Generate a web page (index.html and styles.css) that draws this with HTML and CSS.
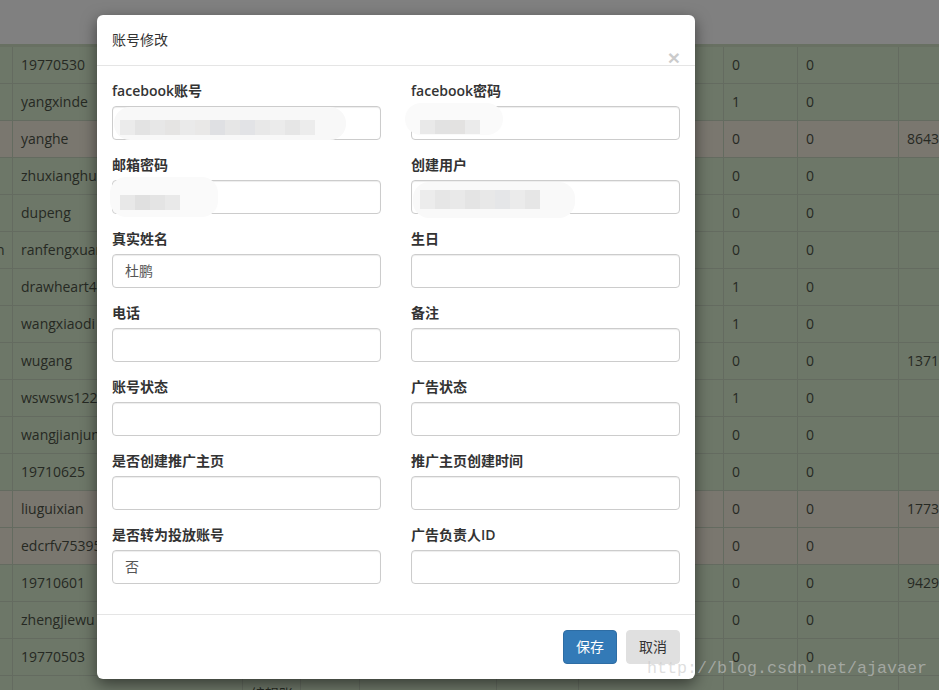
FILE: index.html
```html
<!DOCTYPE html>
<html lang="zh-CN">
<head>
<meta charset="utf-8">
<title>账号修改</title>
<link rel="stylesheet" href="styles.css">
</head>
<body>
<div class="page">
  <div class="thead"></div>
  <div class="thead-rule"></div>
  <div class="grid">
    <div class="row g"><div class="c c0"></div><div class="c c1">19770530</div><div class="c c2"></div><div class="c c3"></div><div class="c c4"></div><div class="c c5"></div><div class="c c6"></div><div class="c c7">0</div><div class="c c8">0</div><div class="c c9"></div></div>
    <div class="row g"><div class="c c0"></div><div class="c c1">yangxinde</div><div class="c c2"></div><div class="c c3"></div><div class="c c4"></div><div class="c c5"></div><div class="c c6"></div><div class="c c7">1</div><div class="c c8">0</div><div class="c c9"></div></div>
    <div class="row b"><div class="c c0"></div><div class="c c1">yanghe</div><div class="c c2"></div><div class="c c3"></div><div class="c c4"></div><div class="c c5"></div><div class="c c6"></div><div class="c c7">0</div><div class="c c8">0</div><div class="c c9">8643</div></div>
    <div class="row g"><div class="c c0"></div><div class="c c1">zhuxianghu</div><div class="c c2"></div><div class="c c3"></div><div class="c c4"></div><div class="c c5"></div><div class="c c6"></div><div class="c c7">0</div><div class="c c8">0</div><div class="c c9"></div></div>
    <div class="row g"><div class="c c0"></div><div class="c c1">dupeng</div><div class="c c2"></div><div class="c c3"></div><div class="c c4"></div><div class="c c5"></div><div class="c c6"></div><div class="c c7">0</div><div class="c c8">0</div><div class="c c9"></div></div>
    <div class="row g"><div class="c c0 tail">n</div><div class="c c1">ranfengxuan</div><div class="c c2"></div><div class="c c3"></div><div class="c c4"></div><div class="c c5"></div><div class="c c6"></div><div class="c c7">0</div><div class="c c8">0</div><div class="c c9"></div></div>
    <div class="row g"><div class="c c0"></div><div class="c c1">drawheart4</div><div class="c c2"></div><div class="c c3"></div><div class="c c4"></div><div class="c c5"></div><div class="c c6"></div><div class="c c7">1</div><div class="c c8">0</div><div class="c c9"></div></div>
    <div class="row g"><div class="c c0"></div><div class="c c1">wangxiaodi</div><div class="c c2"></div><div class="c c3"></div><div class="c c4"></div><div class="c c5"></div><div class="c c6"></div><div class="c c7">1</div><div class="c c8">0</div><div class="c c9"></div></div>
    <div class="row g"><div class="c c0"></div><div class="c c1">wugang</div><div class="c c2"></div><div class="c c3"></div><div class="c c4"></div><div class="c c5"></div><div class="c c6"></div><div class="c c7">0</div><div class="c c8">0</div><div class="c c9">1371</div></div>
    <div class="row g"><div class="c c0"></div><div class="c c1">wswsws122</div><div class="c c2"></div><div class="c c3"></div><div class="c c4"></div><div class="c c5"></div><div class="c c6"></div><div class="c c7">1</div><div class="c c8">0</div><div class="c c9"></div></div>
    <div class="row g"><div class="c c0"></div><div class="c c1">wangjianjun</div><div class="c c2"></div><div class="c c3"></div><div class="c c4"></div><div class="c c5"></div><div class="c c6"></div><div class="c c7">0</div><div class="c c8">0</div><div class="c c9"></div></div>
    <div class="row g"><div class="c c0"></div><div class="c c1">19710625</div><div class="c c2"></div><div class="c c3"></div><div class="c c4"></div><div class="c c5"></div><div class="c c6"></div><div class="c c7">0</div><div class="c c8">0</div><div class="c c9"></div></div>
    <div class="row b"><div class="c c0"></div><div class="c c1">liuguixian</div><div class="c c2"></div><div class="c c3"></div><div class="c c4"></div><div class="c c5"></div><div class="c c6"></div><div class="c c7">0</div><div class="c c8">0</div><div class="c c9">1773</div></div>
    <div class="row b"><div class="c c0"></div><div class="c c1">edcrfv75395</div><div class="c c2"></div><div class="c c3"></div><div class="c c4"></div><div class="c c5"></div><div class="c c6"></div><div class="c c7">0</div><div class="c c8">0</div><div class="c c9"></div></div>
    <div class="row g"><div class="c c0"></div><div class="c c1">19710601</div><div class="c c2"></div><div class="c c3"></div><div class="c c4"></div><div class="c c5"></div><div class="c c6"></div><div class="c c7">0</div><div class="c c8">0</div><div class="c c9">9429</div></div>
    <div class="row g"><div class="c c0"></div><div class="c c1">zhengjiewu</div><div class="c c2"></div><div class="c c3"></div><div class="c c4"></div><div class="c c5"></div><div class="c c6"></div><div class="c c7">0</div><div class="c c8">0</div><div class="c c9"></div></div>
    <div class="row g"><div class="c c0"></div><div class="c c1">19770503</div><div class="c c2"></div><div class="c c3"></div><div class="c c4"></div><div class="c c5"></div><div class="c c6"></div><div class="c c7">0</div><div class="c c8">0</div><div class="c c9"></div></div>
    <div class="row g"><div class="c c0"></div><div class="c c1"></div><div class="c c2">编辑账</div><div class="c c3"></div><div class="c c4"></div><div class="c c5"></div><div class="c c6"></div><div class="c c7"></div><div class="c c8"></div><div class="c c9"></div></div>
  </div>

  <div class="modal">
    <div class="modal-header">
      <h4 class="modal-title">账号修改</h4>
      <span class="close">×</span>
    </div>
    <div class="modal-body">
      <div class="form-row">
        <div class="form-group">
          <label>facebook账号</label>
          <div class="input"></div>
          <div class="haze haze1"></div>
          <div class="pix pix1"></div>
        </div>
        <div class="form-group">
          <label>facebook密码</label>
          <div class="input"></div>
          <div class="haze haze2"></div>
          <div class="pix pix2"></div>
        </div>
      </div>
      <div class="form-row">
        <div class="form-group">
          <label>邮箱密码</label>
          <div class="input"></div>
          <div class="haze haze3"></div>
          <div class="pix pix3"></div>
        </div>
        <div class="form-group">
          <label>创建用户</label>
          <div class="input"></div>
          <div class="haze haze4"></div>
          <div class="pix pix4"></div>
        </div>
      </div>
      <div class="form-row">
        <div class="form-group">
          <label>真实姓名</label>
          <div class="input">杜鹏</div>
        </div>
        <div class="form-group">
          <label>生日</label>
          <div class="input"></div>
        </div>
      </div>
      <div class="form-row">
        <div class="form-group">
          <label>电话</label>
          <div class="input"></div>
        </div>
        <div class="form-group">
          <label>备注</label>
          <div class="input"></div>
        </div>
      </div>
      <div class="form-row">
        <div class="form-group">
          <label>账号状态</label>
          <div class="input"></div>
        </div>
        <div class="form-group">
          <label>广告状态</label>
          <div class="input"></div>
        </div>
      </div>
      <div class="form-row">
        <div class="form-group">
          <label>是否创建推广主页</label>
          <div class="input"></div>
        </div>
        <div class="form-group">
          <label>推广主页创建时间</label>
          <div class="input"></div>
        </div>
      </div>
      <div class="form-row">
        <div class="form-group">
          <label>是否转为投放账号</label>
          <div class="input">否</div>
        </div>
        <div class="form-group">
          <label>广告负责人ID</label>
          <div class="input"></div>
        </div>
      </div>
    </div>
    <div class="modal-footer">
      <button class="btn btn-primary">保存</button>
      <button class="btn btn-default">取消</button>
    </div>
  </div>

  <div class="watermark">http://blog.csdn.net/ajavaer</div>
</div>
</body>
</html>
```

FILE: styles.css
```css
* { box-sizing: border-box; }
html, body { margin: 0; padding: 0; }
body {
  width: 939px;
  height: 690px;
  overflow: hidden;
  background: #6d7768;
  font-family: "Open Sans", "Noto Sans CJK SC", sans-serif;
  font-size: 14px;
  line-height: 20px;
  color: #333;
}
.page { position: relative; width: 939px; height: 690px; overflow: hidden; }

.thead { height: 44px; background: #808080; }
.thead-rule { height: 3px; background: #687062; }

.grid { display: flex; flex-direction: column; }
.row { display: flex; height: 37px; border-bottom: 1px solid #646b60; color: #262923; }
.row.g { background: #6d7768; }
.row.b { background: #7a776f; }
.c {
  flex: none;
  padding: 8px;
  border-left: 1px solid #646b60;
  overflow: hidden;
  white-space: nowrap;
}
.c0 { width: 12px; border-left: 0; padding: 8px 0; }
.c0.tail { text-indent: -4px; }
.c1 { width: 230px; }
.c2 { width: 58px; }
.c3 { width: 59px; }
.c4 { width: 137px; }
.c5 { width: 82px; }
.c6 { width: 145px; }
.c7 { width: 74px; }
.c8 { width: 101px; }
.c9 { flex: 1; }

/* modal */
.modal {
  position: absolute;
  left: 97px;
  top: 15px;
  width: 598px;
  background: #fff;
  border-radius: 6px;
  box-shadow: 0 5px 15px rgba(0, 0, 0, 0.5);
}
.modal-header {
  position: relative;
  padding: 15px;
  border-bottom: 1px solid #e5e5e5;
}
.modal-title {
  margin: 0;
  font-size: 14px;
  font-weight: 400;
  line-height: 20px;
  color: #333;
}
.close {
  position: absolute;
  right: 15px;
  top: 32px;
  font-family: "Liberation Sans", sans-serif;
  font-size: 21px;
  font-weight: 700;
  line-height: 1;
  color: #000;
  opacity: 0.2;
}
.modal-body { padding: 15px; }
.form-row { display: grid; grid-template-columns: 1fr 1fr; column-gap: 30px; }
.form-group { position: relative; margin-bottom: 15px; }
.form-group label {
  display: block;
  margin-bottom: 5px;
  font-weight: 600;
  color: #333;
}
.input {
  height: 34px;
  padding: 6px 12px;
  border: 1px solid #ccc;
  border-radius: 4px;
  box-shadow: inset 0 1px 1px rgba(0, 0, 0, 0.075);
  color: #555;
  background: #fff;
}

/* pixelated privacy blur */
.haze { position: absolute; border-radius: 16px; }
.haze1 { left: 2px; top: 26px; width: 232px; height: 33px; background: #f8f8f8; }
.haze2 { left: -6px; top: 22px; width: 98px; height: 32px; background: #fafafa; }
.haze3 { left: -2px; top: 22px; width: 108px; height: 40px; background: #fafafa; }
.haze4 { left: 2px; top: 27px; width: 162px; height: 36px; background: #f9f9f9; }
.pix { position: absolute; }
.pix1 {
  left: 8px; top: 39px; width: 195px; height: 15px;
  background: linear-gradient(90deg,
    #ebebeb 0 15px, #e3e3e3 15px 30px, #e7e7e7 30px 45px, #e5e4e3 45px 60px,
    #eaeaea 60px 75px, #e9e8e7 75px 90px, #dfe0e3 90px 105px, #e6e6e6 105px 120px,
    #e2e3e6 120px 135px, #e8e8e8 135px 150px, #ebebeb 150px 165px, #e6e6e6 165px 180px,
    #ececec 180px 195px);
}
.pix2 {
  left: 9px; top: 39px; width: 60px; height: 14px;
  background: linear-gradient(90deg, #e9e9e9 0 15px, #e2e2e2 15px 30px, #e3e2e1 30px 45px, #ebebeb 45px 60px);
}
.pix3 {
  left: 8px; top: 40px; width: 60px; height: 15px;
  background: linear-gradient(90deg, #e8e8e8 0 15px, #e0e0e0 15px 30px, #e4e4e4 30px 45px, #e9e9e9 45px 60px);
}
.pix4 {
  left: 9px; top: 35px; width: 120px; height: 19px;
  background: linear-gradient(90deg,
    #ececec 0 15px, #e6e6e6 15px 30px, #e9e9e9 30px 45px, #e4e4e4 45px 60px,
    #e8e8e8 60px 75px, #e5e6e8 75px 90px, #ebebeb 90px 105px, #e6e6e6 105px 120px);
}

.modal-footer {
  display: flex;
  justify-content: flex-end;
  gap: 9px;
  padding: 15px;
  border-top: 1px solid #e5e5e5;
}
.btn {
  height: 34px;
  padding: 6px 12px;
  font-family: "Open Sans", "Noto Sans CJK SC", sans-serif;
  font-size: 14px;
  line-height: 20px;
  border: 1px solid transparent;
  border-radius: 4px;
}
.btn-primary { background: #337ab7; border-color: #2e6da4; color: #fff; }
.btn-default { background: #e0e0e0; border-color: #e0e0e0; color: #333; }

.watermark {
  position: absolute;
  left: 647px;
  top: 660px;
  font-family: "Liberation Mono", monospace;
  font-size: 16.67px;
  line-height: 17px;
  color: rgba(200, 200, 200, 0.6);
  white-space: nowrap;
}
```
